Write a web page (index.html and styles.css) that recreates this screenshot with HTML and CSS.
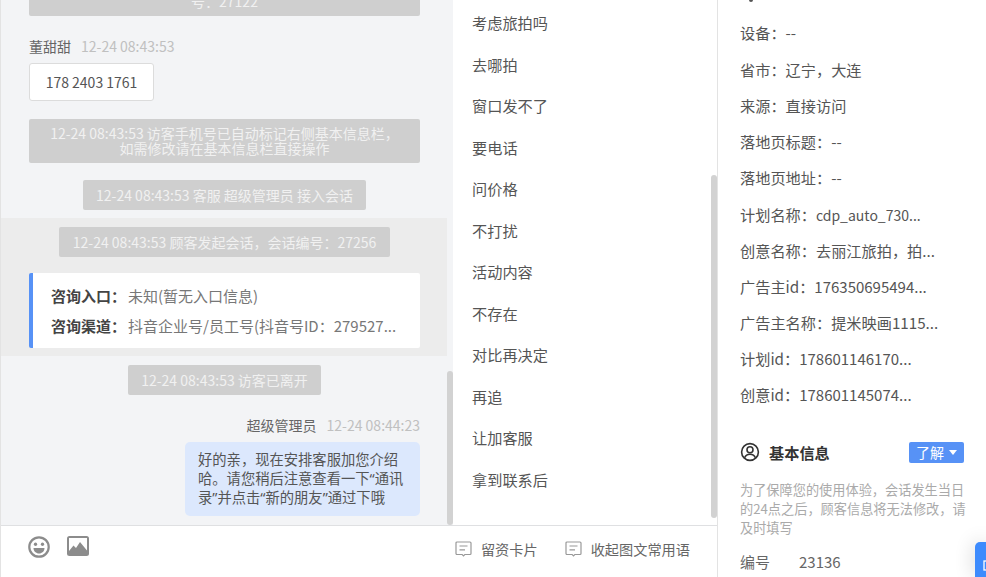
FILE: index.html
```html
<!DOCTYPE html>
<html lang="zh">
<head>
<meta charset="utf-8">
<title>会话</title>
<link rel="stylesheet" href="styles.css">
</head>
<body>
<div class="app">
  <section class="chat">
    <div class="log">
      <div class="rail"><div class="scroll-thumb"></div></div>
      <div class="stack">
        <div class="row"><div class="sys wide two">12-24 08:43:53 顾客发起会话，会话编<br>号：27122</div></div>
        <div class="meta meta-first"><span class="who">董甜甜</span><span class="time">12-24 08:43:53</span></div>
        <div class="row-left"><div class="phone">178 2403 1761</div></div>
        <div class="row gap-a"><div class="sys wide two">12-24 08:43:53 访客手机号已自动标记右侧基本信息栏，<br>如需修改请在基本信息栏直接操作</div></div>
        <div class="row gap-b"><div class="sys">12-24 08:43:53 客服 超级管理员 接入会话</div></div>
        <div class="band">
          <div class="row"><div class="sys">12-24 08:43:53 顾客发起会话，会话编号：27256</div></div>
          <div class="card">
            <div class="card-line"><b>咨询入口：</b><span class="card-val">未知(暂无入口信息)</span></div>
            <div class="card-line"><b>咨询渠道：</b><span class="card-val">抖音企业号/员工号(抖音号ID：279527...</span></div>
          </div>
        </div>
        <div class="row gap-c"><div class="sys">12-24 08:43:53 访客已离开</div></div>
        <div class="meta meta-right"><span class="who">超级管理员</span><span class="time">12-24 08:44:23</span></div>
        <div class="row-right"><div class="bubble">好的亲，现在安排客服加您介绍哈。请您稍后注意查看一下“通讯录”并点击“新的朋友”通过下哦</div></div>
      </div>
    </div>
    <div class="tools">
      <svg width="22" height="22" viewBox="0 0 24 24"><circle cx="12" cy="12" r="10.600" fill="none" stroke="#8c8c8c" stroke-width="2.400"/><circle cx="8.200" cy="9" r="1.800" fill="#8c8c8c"/><circle cx="15.800" cy="9" r="1.800" fill="#8c8c8c"/><path d="M6 13h12c0 3.500-2.700 6-6 6s-6-2.500-6-6z" fill="#8c8c8c"/></svg>
      <svg width="22" height="20" viewBox="0 0 22 20"><rect width="22" height="20" rx="2.500" fill="#8c8c8c"/><rect x="2" y="2" width="18" height="13" fill="#fff"/><path d="M2 15l4.500-5.500L9 12l4-6 7 8.500V16H2z" fill="#8c8c8c"/></svg>
    </div>
  </section>
  <section class="mid">
    <div class="phrases">
      <div class="list">
        <div class="phrase">考虑旅拍吗</div>
        <div class="phrase">去哪拍</div>
        <div class="phrase">窗口发不了</div>
        <div class="phrase">要电话</div>
        <div class="phrase">问价格</div>
        <div class="phrase">不打扰</div>
        <div class="phrase">活动内容</div>
        <div class="phrase">不存在</div>
        <div class="phrase">对比再决定</div>
        <div class="phrase">再追</div>
        <div class="phrase">让加客服</div>
        <div class="phrase">拿到联系后</div>
      </div>
      <div class="mid-thumb"></div>
    </div>
    <div class="mid-foot">
      <span class="action"><svg width="17" height="16" viewBox="0 0 17 16"><path d="M2 1h13a1 1 0 0 1 1 1v10.500a1 1 0 0 1-1 1h-5.200l-1.300 1.300-1.300-1.300H2a1 1 0 0 1-1-1V2a1 1 0 0 1 1-1z" fill="none" stroke="#999" stroke-width="1.200"/><path d="M4.500 5h8M4.500 8.800h5.500" stroke="#999" stroke-width="1.200"/></svg>留资卡片</span>
      <span class="action"><svg width="17" height="16" viewBox="0 0 17 16"><path d="M2 1h13a1 1 0 0 1 1 1v10.500a1 1 0 0 1-1 1h-5.200l-1.300 1.300-1.300-1.300H2a1 1 0 0 1-1-1V2a1 1 0 0 1 1-1z" fill="none" stroke="#999" stroke-width="1.200"/><path d="M4.500 5h8M4.500 8.800h5.500" stroke="#999" stroke-width="1.200"/></svg>收起图文常用语</span>
    </div>
  </section>
  <aside class="info">
    <div class="peek"></div>
    <div class="kv first">设备：--</div>
    <div class="kv">省市：辽宁，大连</div>
    <div class="kv">来源：直接访问</div>
    <div class="kv">落地页标题：--</div>
    <div class="kv">落地页地址：--</div>
    <div class="kv">计划名称：<span class="lat">cdp_auto_730...</span></div>
    <div class="kv">创意名称：去丽江旅拍，拍...</div>
    <div class="kv">广告主id：<span class="digits">176350695494...</span></div>
    <div class="kv">广告主名称：提米映画1115...</div>
    <div class="kv">计划id：<span class="digits">178601146170...</span></div>
    <div class="kv">创意id：<span class="digits">178601145074...</span></div>
    <div class="head">
      <svg width="20" height="20" viewBox="0 0 20 20"><circle cx="10" cy="10" r="8.400" fill="none" stroke="#333" stroke-width="1.600"/><circle cx="10" cy="7.800" r="3" fill="none" stroke="#333" stroke-width="1.600"/><path d="M4.600 15.800c1-2.600 3-3.600 5.400-3.600s4.400 1 5.400 3.600" fill="none" stroke="#333" stroke-width="1.600"/></svg>
      <span class="head-title">基本信息</span>
      <span class="pill">了解<i class="caret"></i></span>
    </div>
    <p class="note">为了保障您的使用体验，会话发生当日的24点之后，顾客信息将无法修改，请及时填写</p>
    <div class="num"><span class="num-k">编号</span><span>23136</span></div>
    <div class="float">
      <svg width="9" height="11" viewBox="0 0 9 11"><rect x="1" y="1" width="9" height="9" fill="none" stroke="#fff" stroke-width="1.300"/></svg>
    </div>
  </aside>
</div>
</body>
</html>
```
FILE: styles.css
```css
* { box-sizing: border-box; }
html, body { margin: 0; height: 100%; overflow: hidden; }
body {
  width: 986px;
  height: 577px;
  background: #fff;
  color: #555;
  font-family: "Noto Sans CJK SC", "Noto Sans", sans-serif;
  font-size: 14px;
}
.app { display: flex; height: 577px; }

/* chat column */
.chat {
  width: 453px;
  flex: none;
  display: flex;
  flex-direction: column;
  border-left: 1px solid #e3e3e3;
}
.log {
  height: 526px;
  flex: none;
  display: flex;
  flex-direction: row-reverse;
  background: #f3f4f6;
  border-bottom: 1px solid #dfe0e2;
  overflow: hidden;
}
.rail {
  width: 6px;
  flex: none;
  display: flex;
  flex-direction: column;
  justify-content: flex-end;
}
.scroll-thumb { height: 154px; background: #d2d2d2; border-radius: 3px; }
.stack {
  flex: 1;
  min-width: 0;
  display: flex;
  flex-direction: column;
  justify-content: flex-end;
  padding-bottom: 9px;
}
.row { display: flex; justify-content: center; padding: 0 27px 0 28px; flex: none; }
.sys {
  background: #cfcfcf;
  color: #f1f1f1;
  border-radius: 2px;
  padding: 0 13.500px;
  height: 30px;
  line-height: 30px;
  text-align: center;
  white-space: nowrap;
}
.sys.wide { width: 391px; }
.sys.two { height: 44px; line-height: 15px; padding-top: 7px; }
.gap-a { margin-top: 18px; }
.gap-b { margin-top: 17px; }
.gap-c { margin-top: 9px; }
.meta { display: flex; gap: 10px; padding: 0 27px 0 28px; height: 20px; line-height: 20px; flex: none; }
.meta-first { margin-top: 20px; }
.meta-right { justify-content: flex-end; margin-top: 20px; margin-bottom: 7px; }
.who { color: #666; }
.time { color: #c0c0c0; }
.row-left { padding-left: 28px; margin-top: 7px; flex: none; }
.phone {
  width: 125px;
  height: 38px;
  line-height: 36px;
  text-align: center;
  background: #fff;
  border: 1px solid #dcdcdc;
  border-radius: 3px;
}
.band { background: #ececec; height: 138px; margin-top: 8px; padding-top: 9px; flex: none; }
.card {
  margin: 16px 27px 0 28px;
  height: 75px;
  background: #fff;
  border-left: 4px solid #5792f6;
  border-radius: 2px;
  padding: 8px 0 0 18px;
  font-size: 15px;
  color: #777;
}
.card-line { height: 30px; line-height: 30px; white-space: nowrap; }
.card-line b { color: #444; font-weight: 700; }
.card-val { margin-left: 2px; }
.row-right { display: flex; justify-content: flex-end; padding-right: 27px; flex: none; }
.bubble {
  width: 235px;
  height: 74px;
  background: #dce8fd;
  border-radius: 5px;
  padding: 8px 10px 0 13px;
  font-family: "Noto Sans", "Noto Sans CJK SC", sans-serif;
  font-size: 14.300px;
  line-height: 19px;
}
.tools { flex: 1; display: flex; gap: 17px; align-items: flex-start; padding: 10px 0 0 27px; }

/* phrases */
.mid {
  width: 265px;
  flex: none;
  display: flex;
  flex-direction: column;
  border-right: 1px solid #e3e3e3;
}
.phrases { height: 526px; flex: none; display: flex; border-bottom: 1px solid #dfe0e2; position: relative; overflow: hidden; }
.list { flex: 1; padding: 2px 0 0 19px; font-size: 15.200px; }
.phrase { height: 41.500px; line-height: 40px; }
.mid-thumb { position: absolute; right: 0; bottom: 7px; width: 6px; height: 343px; background: #d2d2d2; border-radius: 3px; }
.mid-foot { flex: 1; display: flex; justify-content: flex-end; gap: 27px; padding: 13px 27px 0 0; line-height: 20px; font-size: 14.200px; color: #666; }
.action { display: flex; align-items: center; height: 20px; gap: 9px; }

/* info */
.info { flex: 1; position: relative; padding-left: 22px; overflow: hidden; font-size: 15.200px; }
.peek { position: absolute; left: 31px; top: -2px; width: 4px; height: 4px; background: #555; border-radius: 50%; }
.kv { height: 36.150px; line-height: 36px; white-space: nowrap; }
.kv.first { margin-top: 14px; height: 37px; }
.lat { font-size: 14px; }
.digits { font-size: 15px; }
.head { display: flex; align-items: center; margin-top: 29px; height: 22px; }
.head-title { margin-left: 9px; font-weight: 700; color: #333; }
.pill {
  margin-left: auto;
  margin-right: 22px;
  width: 55px;
  height: 21px;
  background: #5792f6;
  color: #fff;
  border-radius: 2px;
  font-size: 14px;
  padding-left: 7px;
  display: flex;
  align-items: center;
}
.caret { margin-left: 5px; border: 4px solid transparent; border-top: 5px solid #fff; border-bottom: 0; }
.note { margin: 17px 20px 0 0; font-size: 13.200px; line-height: 19px; color: #aaa; }
.num { margin-top: 15px; line-height: 20px; height: 20px; display: flex; color: #666; font-size: 15px; }
.num-k { width: 59px; }
.float {
  position: absolute;
  right: 0;
  bottom: 0;
  width: 11px;
  height: 35px;
  background: #3d8bfd;
  border-radius: 5px 0 0 0;
  box-shadow: 0 0 20px rgba(0, 0, 0, .2);
  padding: 11px 0 0 8px;
  overflow: hidden;
}
```
